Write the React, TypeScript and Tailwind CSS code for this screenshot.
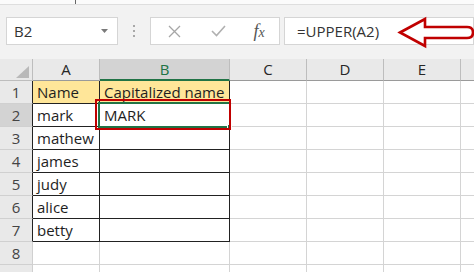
import React from "react";

const rows: [string, string][] = [
  ["Name", "Capitalized name"],
  ["mark", "MARK"],
  ["mathew", ""],
  ["james", ""],
  ["judy", ""],
  ["alice", ""],
  ["betty", ""],
  ["", ""],
  ["", ""],
];

const font = { fontFamily: '"Open Sans", "Liberation Sans", sans-serif' };

export default function App() {
  return (
    <div
      className="relative w-[474px] h-[272px] overflow-hidden bg-[#f2f2f2] text-[#222]"
      style={font}
    >
      {/* top strip */}
      <div className="h-[5px] bg-[#fbfbfb] border-b border-[#dedede] pl-[75px]">
        <div className="w-px h-[4px] bg-[#666]" />
      </div>

      {/* formula bar */}
      <div className="mt-[12px] flex h-[28px] items-stretch">
        <div className="ml-[6px] w-[122px] bg-white border border-[#d5d5d5] flex items-center justify-between pl-[7px] pr-[9px]">
          <span className="text-[15px] leading-none text-[#333]">B2</span>
          <svg width="7" height="4" viewBox="0 0 7 4">
            <path d="M0 0 L7 0 L3.5 4 Z" fill="#7a7a7a" />
          </svg>
        </div>
        <div className="w-[36px] flex flex-col items-center justify-center gap-[3px]">
          <div className="w-[2px] h-[2px] bg-[#a8a8a8]" />
          <div className="w-[2px] h-[2px] bg-[#a8a8a8]" />
          <div className="w-[2px] h-[2px] bg-[#a8a8a8]" />
        </div>
        <div className="w-[131px] bg-white border border-[#d5d5d5] flex items-center">
          <div className="w-[46px] flex justify-center">
            <svg width="13" height="13" viewBox="0 0 13 13">
              <path d="M1 1 L12 12 M12 1 L1 12" stroke="#a6a6a6" strokeWidth="1.3" fill="none" />
            </svg>
          </div>
          <div className="w-[42px] flex justify-center">
            <svg width="15" height="12" viewBox="0 0 15 12">
              <path d="M1 6 L5.5 10.5 L14 1" stroke="#b0b0b0" strokeWidth="1.6" fill="none" />
            </svg>
          </div>
          <div className="w-[40px] flex justify-center items-baseline text-[#555] italic" style={{ fontFamily: '"Liberation Serif", "DejaVu Serif", serif' }}>
            <span className="text-[18px] leading-none">f</span>
            <span className="text-[14px] leading-none">x</span>
          </div>
        </div>
        <div className="ml-[4px] w-[190px] shrink-0 bg-white border border-[#d5d5d5] flex items-center pl-[12px]">
          <span className="text-[15px] leading-none text-[#333]">=UPPER(A2)</span>
        </div>
      </div>

      {/* sheet grid */}
      <div className="mt-[14px] grid grid-cols-[33px_67px_130px_77px_77px_77px_40px] grid-rows-[22px_repeat(9,23px)] bg-white">
        {/* header row */}
        <div className="bg-[#e9e9e9] border-r border-b border-[#bdbdbd] flex items-end justify-end pr-[3px] pb-[2px]">
          <svg width="13" height="12" viewBox="0 0 13 12">
            <path d="M13 0 L13 12 L0 12 Z" fill="#b9b9b9" />
          </svg>
        </div>
        <div className="bg-[#e9e9e9] border-r border-b border-[#bdbdbd] border-b-[#9a9a9a] flex items-center justify-center text-[15px] text-[#262626]">A</div>
        <div className="bg-[#d3d3d3] border-r border-[#bdbdbd] border-b-2 border-b-[#217346] flex items-center justify-center text-[15px] text-[#217346]">B</div>
        <div className="bg-[#e9e9e9] border-r border-b border-[#bdbdbd] border-b-[#9a9a9a] flex items-center justify-center text-[15px] text-[#262626]">C</div>
        <div className="bg-[#e9e9e9] border-r border-b border-[#bdbdbd] border-b-[#9a9a9a] flex items-center justify-center text-[15px] text-[#262626]">D</div>
        <div className="bg-[#e9e9e9] border-r border-b border-[#bdbdbd] border-b-[#9a9a9a] flex items-center justify-center text-[15px] text-[#262626]">E</div>
        <div className="bg-[#e9e9e9] border-b border-[#9a9a9a]" />

        {rows.map((r, i) => {
          const inData = i < 7;
          const selected = i === 1;
          const header = i === 0;
          return (
            <React.Fragment key={i}>
              <div
                className={
                  "flex items-center justify-center text-[15px] border-b border-r " +
                  (selected ? "bg-[#d3d3d3] text-[#444] " : "bg-[#e9e9e9] text-[#444] ") +
                  (inData ? "border-b-[#d0d0d0] border-r-[#222]" : "border-[#d0d0d0]")
                }
              >
                {i + 1}
              </div>
              <div
                className={
                  "flex items-center pl-[4px] text-[15px] text-[#1e1e1e] border-r border-b " +
                  (header ? "bg-[#ffe699] " : "") +
                  (inData ? "border-[#222]" : "border-[#d4d4d4]")
                }
              >
                {r[0]}
              </div>
              <div
                className={
                  "flex items-center pl-[4px] text-[15px] text-[#1e1e1e] border-r border-b " +
                  (header ? "bg-[#ffe699] " : "") +
                  (inData ? "border-[#222]" : "border-[#d4d4d4]")
                }
              >
                {r[1]}
              </div>
              <div className="border-r border-b border-[#d4d4d4]" />
              <div className="border-r border-b border-[#d4d4d4]" />
              <div className="border-r border-b border-[#d4d4d4]" />
              <div className="border-b border-[#d4d4d4]" />
            </React.Fragment>
          );
        })}
      </div>

      {/* selection around B2 */}
      <div className="absolute left-[98px] top-[102px] w-[133px] h-[26px] border-2 border-[#217346]" />
      <div className="absolute left-[227px] top-[124px] w-[5px] h-[5px] bg-[#217346] border border-white" />

      {/* red annotation box */}
      <div className="absolute left-[95px] top-[99px] w-[136px] h-[31px] border-[2.5px] border-[#c00000]" />

      {/* red arrow */}
      <svg className="absolute left-0 top-0" width="474" height="60" viewBox="0 0 474 60">
        <path
          d="M400 32.5 L425 19 L425 27 L467 27 Q473 27 473 32.5 Q473 38 467 38 L425 38 L425 46 Z"
          fill="white"
          stroke="#c00000"
          strokeWidth="2.6"
          strokeLinejoin="miter"
        />
      </svg>
    </div>
  );
}
